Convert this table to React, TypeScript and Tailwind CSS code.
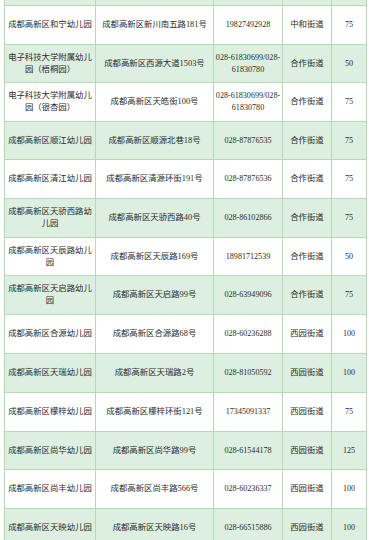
import React from 'react';

interface School {
  name: React.ReactNode;
  address: string;
  phone: React.ReactNode;
  street: string;
  seats: number;
  h: string;
}

const schools: School[] = [
  { name: '成都高新区和宁幼儿园', address: '成都高新区新川南五路181号', phone: '19827492928', street: '中和街道', seats: 75, h: 'h-[39px]' },
  {
    name: (<>电子科技大学附属幼儿<br />园（梧桐园）</>),
    address: '成都高新区西源大道1503号',
    phone: (<>028-61830699/028-<br />61830780</>),
    street: '合作街道',
    seats: 50,
    h: 'h-[38px]',
  },
  {
    name: (<>电子科技大学附属幼儿<br />园（银杏园）</>),
    address: '成都高新区天皓街100号',
    phone: (<>028-61830699/028-<br />61830780</>),
    street: '合作街道',
    seats: 75,
    h: 'h-[39px]',
  },
  { name: '成都高新区顺江幼儿园', address: '成都高新区顺源北巷18号', phone: '028-87876535', street: '合作街道', seats: 75, h: 'h-[38px]' },
  { name: '成都高新区清江幼儿园', address: '成都高新区清源环街191号', phone: '028-87876536', street: '合作街道', seats: 75, h: 'h-[39px]' },
  {
    name: (<>成都高新区天骄西路幼<br />儿园</>),
    address: '成都高新区天骄西路40号',
    phone: '028-86102866',
    street: '合作街道',
    seats: 75,
    h: 'h-[39px]',
  },
  {
    name: (<>成都高新区天辰路幼儿<br />园</>),
    address: '成都高新区天辰路169号',
    phone: '18981712539',
    street: '合作街道',
    seats: 50,
    h: 'h-[38px]',
  },
  {
    name: (<>成都高新区天启路幼儿<br />园</>),
    address: '成都高新区天启路99号',
    phone: '028-63949096',
    street: '合作街道',
    seats: 75,
    h: 'h-[39px]',
  },
  { name: '成都高新区合源幼儿园', address: '成都高新区合源路68号', phone: '028-60236288', street: '西园街道', seats: 100, h: 'h-[39px]' },
  { name: '成都高新区天瑞幼儿园', address: '成都高新区天瑞路2号', phone: '028-81050592', street: '西园街道', seats: 100, h: 'h-[39px]' },
  { name: '成都高新区檬梓幼儿园', address: '成都高新区檬梓环街121号', phone: '17345091337', street: '西园街道', seats: 75, h: 'h-[39px]' },
  { name: '成都高新区尚华幼儿园', address: '成都高新区尚华路99号', phone: '028-61544178', street: '西园街道', seats: 125, h: 'h-[38px]' },
  { name: '成都高新区尚丰幼儿园', address: '成都高新区尚丰路566号', phone: '028-60236337', street: '西园街道', seats: 100, h: 'h-[39px]' },
  { name: '成都高新区天映幼儿园', address: '成都高新区天映路16号', phone: '028-66515886', street: '西园街道', seats: 100, h: 'h-[39px]' },
];

const cols = 'grid grid-cols-[91px_118px_69px_49px_35px]';
const cell = 'flex items-center justify-center text-center border-r border-[#b3dcb3] whitespace-nowrap';

const App: React.FC = () => {
  return (
    <div
      className="w-[369px] h-[540px] overflow-hidden bg-white text-[#2b2b2b] text-[8.4px] leading-[12px]"
      style={{ fontFamily: '"Liberation Serif", "Noto Sans CJK SC", serif' }}
    >
      <div className="ml-[4px] w-[363px] border-l border-[#b3dcb3]">
        {/* tail of the row above, cut off by the viewport */}
        <div className={`${cols} h-[6px] bg-[#dcefe0] border-b border-[#b3dcb3]`}>
          <div className={cell} />
          <div className={cell} />
          <div className={cell} />
          <div className={cell} />
          <div className={cell} />
        </div>

        {schools.map((s, i) => (
          <div
            key={i}
            className={`${cols} ${s.h} border-b border-[#b3dcb3] ${i % 2 === 1 ? 'bg-[#dcefe0]' : 'bg-white'}`}
          >
            <div className={cell}>{s.name}</div>
            <div className={cell}>{s.address}</div>
            <div className={`${cell} text-[8.1px]`}>{s.phone}</div>
            <div className={cell}>{s.street}</div>
            <div className={`${cell} text-[8.1px]`}>{s.seats}</div>
          </div>
        ))}
      </div>
    </div>
  );
};

export default App;
